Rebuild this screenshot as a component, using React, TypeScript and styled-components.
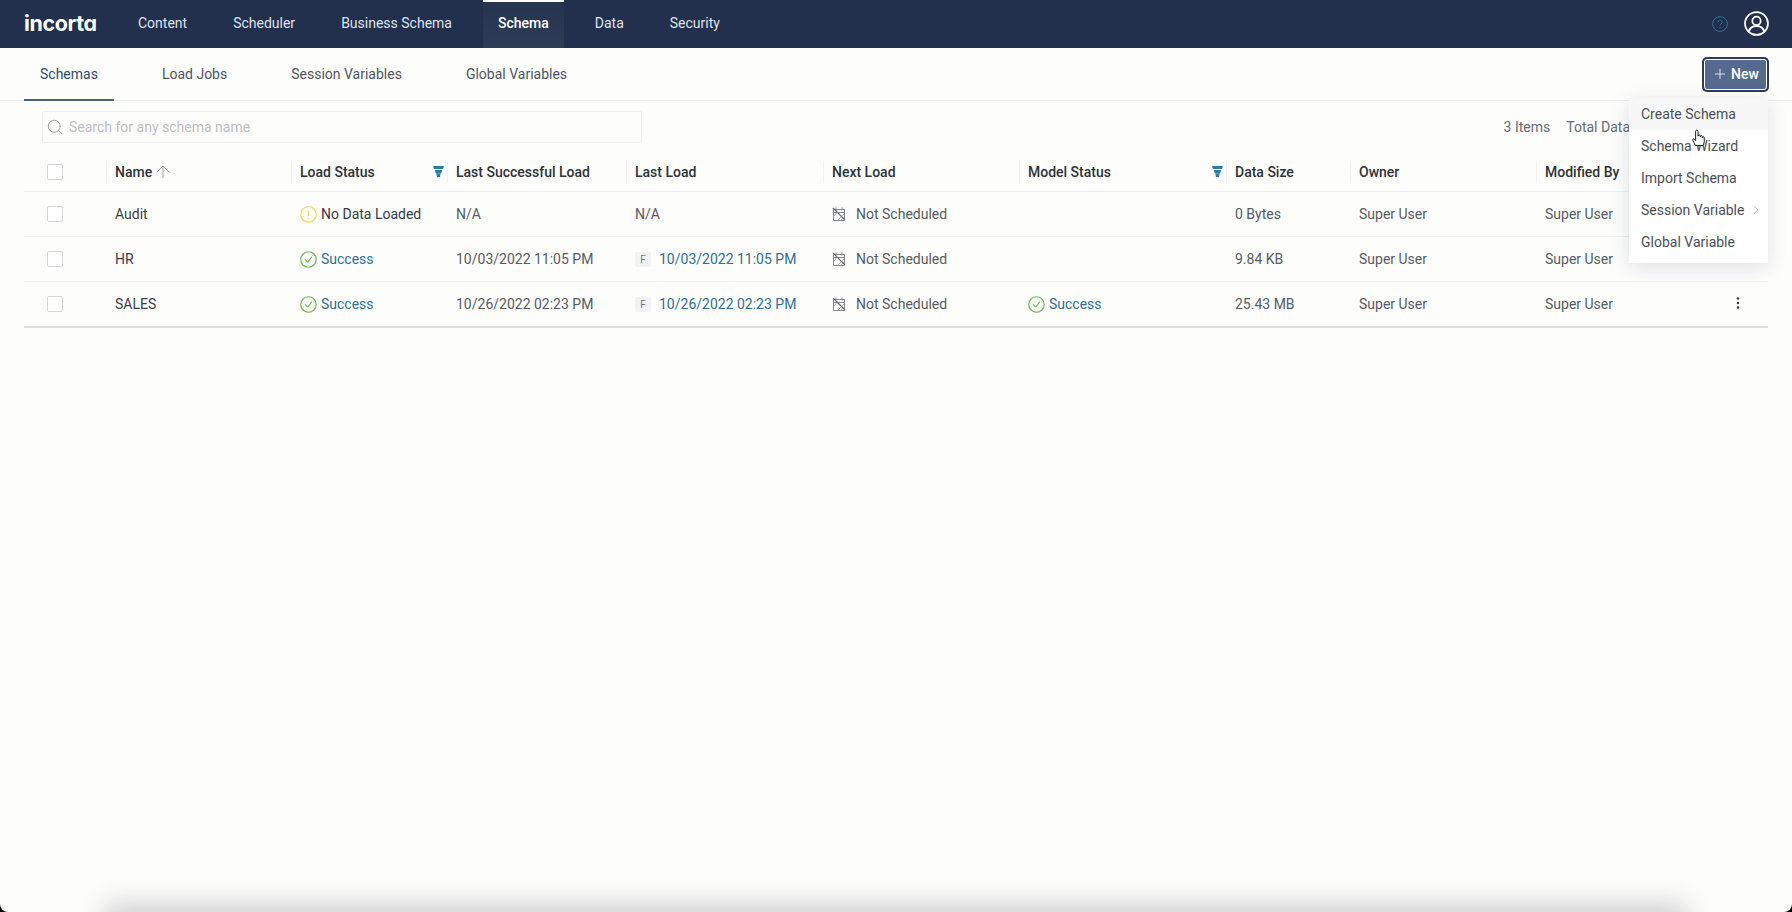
import React from 'react';
import styled, { createGlobalStyle } from 'styled-components';
import { ArrowUp, ChevronRight, Plus, Search } from 'lucide-react';

const GlobalStyle = createGlobalStyle`
  html, body { margin: 0; padding: 0; background: #000; }
  body { font-family: Roboto, "Liberation Sans", Arial, sans-serif; font-size: 14px; color: #555c66; }
  * { box-sizing: border-box; }
`;

const COLUMNS = '82px 185px 156px 179px 197px 196px 207px 124px 186px 1fr';

const Page = styled.div`
  position: relative;
  display: flex;
  flex-direction: column;
  height: 100vh;
  overflow: hidden;
  background: #fdfdfc;
  border-radius: 0 0 8px 8px;
`;

const TopBar = styled.header`
  display: flex;
  align-items: stretch;
  height: 48px;
  padding: 0 23px 0 24px;
  background: #222f4d;
  flex-shrink: 0;
`;

const Logo = styled.div`
  width: 72px;
  align-self: center;
  margin-top: -1px;
  font-family: Inter, sans-serif;
  font-feature-settings: 'cv11';
  font-size: 21.5px;
  font-weight: 700;
  line-height: 1;
  letter-spacing: -0.4px;
  color: #fff;
`;

const Nav = styled.nav`
  display: flex;
  gap: 16px;
  margin-left: 27px;
`;

const NavItem = styled.a<{ $active?: boolean }>`
  display: flex;
  align-items: center;
  padding: 0 15px 4px;
  color: ${(p) => (p.$active ? '#fff' : '#dfe3ea')};
  font-weight: ${(p) => (p.$active ? 500 : 400)};
  border-top: 2px solid ${(p) => (p.$active ? '#fff' : 'transparent')};
  background: ${(p) => (p.$active ? 'linear-gradient(#273450, #2f3c58)' : 'none')};
`;

const TopActions = styled.div`
  display: flex;
  align-items: center;
  gap: 16px;
  margin-left: auto;
  margin-top: -1px;
`;

const SubBar = styled.div`
  display: flex;
  align-items: center;
  justify-content: space-between;
  height: 53px;
  padding: 0 23px 0 24px;
  border-bottom: 1px solid #eceef0;
  flex-shrink: 0;
`;

const Tabs = styled.div`
  display: flex;
  gap: 32px;
  align-self: stretch;
`;

const Tab = styled.a<{ $active?: boolean }>`
  display: flex;
  align-items: center;
  padding: 1px 16px 0;
  margin-bottom: -1px;
  color: ${(p) => (p.$active ? '#2f4a6d' : '#4f565f')};
  border-bottom: 2px solid ${(p) => (p.$active ? '#47627f' : 'transparent')};
`;

const NewWrap = styled.div`
  position: relative;
  padding: 2px;
`;

const NewButton = styled.button`
  display: flex;
  align-items: center;
  gap: 3px;
  width: 63px;
  height: 31px;
  padding: 0 0 0 7px;
  border: 1px solid #fff;
  border-radius: 3px;
  background: #566a8f;
  box-shadow: 0 0 0 2px #2a3c60;
  color: #fff;
  font-family: inherit;
  font-size: 14px;
  font-weight: 500;
`;

const Menu = styled.ul`
  position: absolute;
  top: 41px;
  right: 1px;
  width: 139px;
  height: 165px;
  margin: 0;
  padding: 0;
  list-style: none;
  background: #fff;
  box-shadow: 0 4px 18px rgba(30, 40, 60, 0.14);
  z-index: 3;
`;

const MenuItem = styled.li<{ $hover?: boolean }>`
  display: flex;
  align-items: center;
  justify-content: space-between;
  height: 32px;
  padding: 1px 5px 0 12px;
  color: #4a5058;
  background: ${(p) => (p.$hover ? '#f7f7f8' : 'transparent')};
`;

const HandCursor = styled.svg`
  position: absolute;
  left: 63px;
  top: 31px;
`;

const Toolbar = styled.div`
  display: flex;
  align-items: center;
  height: 48px;
  padding: 10px 138px 6px 18px;
  margin: 0 24px;
  flex-shrink: 0;
`;

const SearchBox = styled.div`
  display: flex;
  align-items: center;
  gap: 5px;
  width: 600px;
  height: 32px;
  padding-left: 3px;
  border: 1px solid #f0f0f1;
  border-radius: 2px;
  color: #bdbfc2;
`;

const Totals = styled.div`
  display: flex;
  gap: 16px;
  margin-left: auto;
  color: #666c74;
`;

const Table = styled.div`
  margin: 0 24px;
`;

const HeadRow = styled.div`
  display: grid;
  grid-template-columns: ${COLUMNS};
  align-items: center;
  height: 43px;
  padding-top: 3px;
  border-bottom: 1px solid #eef0f1;
`;

const HeadCell = styled.div`
  display: flex;
  align-items: center;
  height: 22px;
  padding-left: 8px;
  border-left: 1px solid #f3f3f4;
  color: #2e333a;
  font-weight: 500;
  white-space: nowrap;
  svg.sort { margin-left: 1px; color: #7c8186; }
  svg.filter { margin-left: auto; margin-right: 3px; }
`;

const CheckCell = styled.div`
  display: flex;
  align-items: center;
  padding-left: 23px;
`;

const Check = styled.span`
  display: block;
  width: 16px;
  height: 16px;
  border: 1px solid #d7d7da;
  border-radius: 2px;
  background: #fff;
`;

const Row = styled.div<{ $last?: boolean }>`
  display: grid;
  grid-template-columns: ${COLUMNS};
  align-items: center;
  height: ${(p) => (p.$last ? 46 : 45)}px;
  border-bottom: ${(p) => (p.$last ? '2px solid #dbdcdd' : '1px solid #eef0f1')};
`;

const Cell = styled.div<{ $dark?: boolean }>`
  display: flex;
  align-items: center;
  padding-left: 9px;
  color: ${(p) => (p.$dark ? '#3b4047' : '#565c64')};
  white-space: nowrap;
`;

const StatusText = styled.span<{ $link?: boolean }>`
  margin-left: 4px;
  color: ${(p) => (p.$link ? '#2f7095' : '#363b42')};
`;

const DateLink = styled.span`
  margin-left: 8px;
  color: #2f7095;
`;

const TypeBadge = styled.span`
  display: flex;
  align-items: center;
  justify-content: center;
  width: 16px;
  height: 15px;
  border-radius: 2px;
  background: #f2f2f4;
  color: #71767d;
  font-size: 10px;
`;

const NextLabel = styled.span`
  margin-left: 10px;
`;

const RowMenu = styled.svg`
  margin-left: auto;
  margin-right: 28px;
  margin-top: -2px;
`;

const BottomShadow = styled.div`
  position: absolute;
  left: 112px;
  right: 112px;
  bottom: -20px;
  height: 20px;
  box-shadow: 0 0 26px 8px rgba(30, 30, 40, 0.2);
`;

const FilterIcon = () => (
  <svg className="filter" width="11" height="11" viewBox="0 0 11 11" fill="#2b7ca8">
    <path d="M0 0h11L10 3H1z" />
    <path d="M1.600 4h7.800L8 7.500H3z" />
    <path d="M3.400 7.500h4.200L7 11H4z" />
  </svg>
);

const OkIcon = () => (
  <svg width="17" height="17" viewBox="0 0 16 16" fill="none" stroke="#6dbd4f" strokeWidth="1.100">
    <circle cx="8" cy="8" r="7.300" />
    <path d="M5 8.200l2.200 2.300L11 5.800" strokeLinecap="round" strokeLinejoin="round" />
  </svg>
);

const WarnIcon = () => (
  <svg width="17" height="17" viewBox="0 0 16 16" fill="none" stroke="#f1db5c" strokeWidth="1.100">
    <circle cx="8" cy="8" r="7.300" />
    <path d="M8 4.200v5M8 11v1" strokeWidth="1.300" />
  </svg>
);

const NoScheduleIcon = () => (
  <svg width="14" height="14" viewBox="0 0 14 14" fill="none" stroke="#85898f" strokeWidth="1">
    <path d="M1.500 2.500h11v11h-11zM1.500 5.500h11M4 .5v3M10 .5v3" />
    <path d="M1 1l12 12" stroke="#64686e" strokeWidth="1.100" />
    <path d="M6 13l6-6M9 13l3-3M2 9l3-3.500" strokeWidth=".7" />
  </svg>
);

const rows = [
  { name: 'Audit', ok: false, status: 'No Data Loaded', success: 'N/A', size: '0 Bytes' },
  { name: 'HR', ok: true, status: 'Success', success: '10/03/2022 11:05 PM', last: '10/03/2022 11:05 PM', size: '9.84 KB' },
  {
    name: 'SALES',
    ok: true,
    status: 'Success',
    success: '10/26/2022 02:23 PM',
    last: '10/26/2022 02:23 PM',
    model: 'Success',
    size: '25.43 MB',
  },
];

const App: React.FC = () => {
  return (
    <React.Fragment>
      <GlobalStyle />
      <Page>
        <TopBar>
          <Logo>incorta</Logo>
          <Nav>
            <NavItem>Content</NavItem>
            <NavItem>Scheduler</NavItem>
            <NavItem>Business Schema</NavItem>
            <NavItem $active>Schema</NavItem>
            <NavItem>Data</NavItem>
            <NavItem>Security</NavItem>
          </Nav>
          <TopActions>
            <svg width="16" height="16" viewBox="0 0 16 16" fill="none" stroke="#2f7095" strokeWidth="1">
              <circle cx="8" cy="8" r="7.400" />
              <path d="M6 6.300a2 2 0 1 1 3 1.700c-.7.4-1 .8-1 1.600M8 11v1.200" />
            </svg>
            <svg width="25" height="25" viewBox="0 0 24 24" fill="none" stroke="#fff" strokeWidth="1.700">
              <circle cx="12" cy="12" r="11" />
              <circle cx="12" cy="9.500" r="4" />
              <path d="M4.600 20c.8-3.600 3.600-5.600 7.400-5.600s6.600 2 7.400 5.600" />
            </svg>
          </TopActions>
        </TopBar>
        <SubBar>
          <Tabs>
            <Tab $active>Schemas</Tab>
            <Tab>Load Jobs</Tab>
            <Tab>Session Variables</Tab>
            <Tab>Global Variables</Tab>
          </Tabs>
          <NewWrap>
            <NewButton>
              <Plus size={16} strokeWidth={1.2} />
              New
            </NewButton>
            <Menu>
              <MenuItem $hover>Create Schema</MenuItem>
              <MenuItem>Schema Wizard</MenuItem>
              <MenuItem>Import Schema</MenuItem>
              <MenuItem>
                Session Variable
                <ChevronRight size={14} color="#9a9ea4" strokeWidth={1.2} />
              </MenuItem>
              <MenuItem>Global Variable</MenuItem>
              <HandCursor width="14" height="18" viewBox="0 0 13 17" stroke="#111" strokeWidth=".9" fill="#fff">
                <path d="M3 15.500C2.400 13.800 .8 11.500.6 10.300c-.2-1 .9-1.500 1.700-.6l1 1.200V2.300c0-1.800 2.300-1.800 2.300 0v4.400c0-1.500 2-1.500 2.100 0v.6c.1-1.400 1.900-1.400 2 0v.7c.2-1.100 1.700-1 1.800.3.1 2.700 0 4.900-.7 7.200z" />
              </HandCursor>
            </Menu>
          </NewWrap>
        </SubBar>
        <Toolbar>
          <SearchBox>
            <Search size={18} color="#8a8e94" strokeWidth={1.1} />
            Search for any schema name
          </SearchBox>
          <Totals>
            <span>3 Items</span>
            <span>Total Data</span>
          </Totals>
        </Toolbar>
        <Table>
          <HeadRow>
            <CheckCell>
              <Check />
            </CheckCell>
            <HeadCell>
              Name
              <ArrowUp className="sort" size={20} strokeWidth={0.9} />
            </HeadCell>
            <HeadCell>
              Load Status
              <FilterIcon />
            </HeadCell>
            <HeadCell>Last Successful Load</HeadCell>
            <HeadCell>Last Load</HeadCell>
            <HeadCell>Next Load</HeadCell>
            <HeadCell>
              Model Status
              <FilterIcon />
            </HeadCell>
            <HeadCell>Data Size</HeadCell>
            <HeadCell>Owner</HeadCell>
            <HeadCell>Modified By</HeadCell>
          </HeadRow>
          {rows.map((row, i) => (
            <Row key={row.name} $last={i === rows.length - 1}>
              <CheckCell>
                <Check />
              </CheckCell>
              <Cell $dark>{row.name}</Cell>
              <Cell>
                {row.ok ? <OkIcon /> : <WarnIcon />}
                <StatusText $link={row.ok}>{row.status}</StatusText>
              </Cell>
              <Cell>{row.success}</Cell>
              <Cell>
                {row.last ? (
                  <React.Fragment>
                    <TypeBadge>F</TypeBadge>
                    <DateLink>{row.last}</DateLink>
                  </React.Fragment>
                ) : (
                  'N/A'
                )}
              </Cell>
              <Cell>
                <NoScheduleIcon />
                <NextLabel>Not Scheduled</NextLabel>
              </Cell>
              <Cell>
                {row.model && (
                  <React.Fragment>
                    <OkIcon />
                    <StatusText $link>{row.model}</StatusText>
                  </React.Fragment>
                )}
              </Cell>
              <Cell>{row.size}</Cell>
              <Cell>Super User</Cell>
              <Cell>
                Super User
                {i === rows.length - 1 && (
                  <RowMenu width="4" height="12" viewBox="0 0 4 12" fill="#2e333a">
                    <circle cx="2" cy="1.500" r="1.200" />
                    <circle cx="2" cy="6" r="1.200" />
                    <circle cx="2" cy="10.500" r="1.200" />
                  </RowMenu>
                )}
              </Cell>
            </Row>
          ))}
        </Table>
        <BottomShadow />
      </Page>
    </React.Fragment>
  );
};

export default App;
